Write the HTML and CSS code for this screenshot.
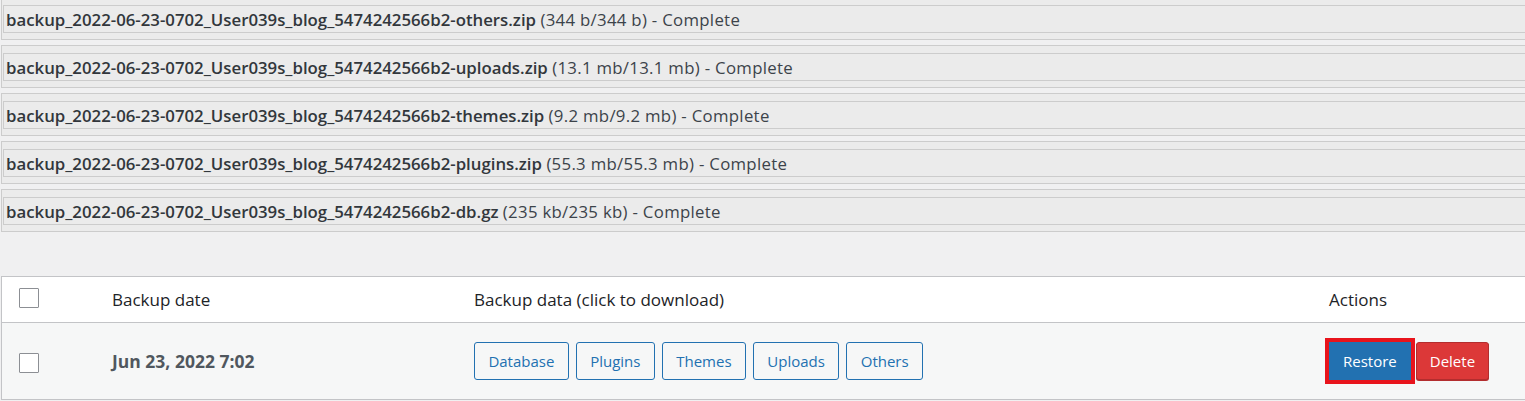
FILE: index.html
```html
<!DOCTYPE html>
<html lang="en">
<head>
<meta charset="utf-8">
<title>Backups</title>
<link rel="stylesheet" href="styles.css">
</head>
<body>
<div class="page">
  <div class="files">
    <div class="file"><div class="file-inner"><strong>backup_2022-06-23-0702_User039s_blog_5474242566b2-others.zip</strong> <span class="meta">(344 b/344 b) - Complete</span></div></div>
    <div class="file"><div class="file-inner"><strong>backup_2022-06-23-0702_User039s_blog_5474242566b2-uploads.zip</strong> <span class="meta">(13.1 mb/13.1 mb) - Complete</span></div></div>
    <div class="file"><div class="file-inner"><strong>backup_2022-06-23-0702_User039s_blog_5474242566b2-themes.zip</strong> <span class="meta">(9.2 mb/9.2 mb) - Complete</span></div></div>
    <div class="file"><div class="file-inner"><strong>backup_2022-06-23-0702_User039s_blog_5474242566b2-plugins.zip</strong> <span class="meta">(55.3 mb/55.3 mb) - Complete</span></div></div>
    <div class="file"><div class="file-inner"><strong>backup_2022-06-23-0702_User039s_blog_5474242566b2-db.gz</strong> <span class="meta">(235 kb/235 kb) - Complete</span></div></div>
  </div>

  <div class="table">
    <div class="row head">
      <div class="cell check"><span class="checkbox"></span></div>
      <div class="cell">Backup date</div>
      <div class="cell">Backup data (click to download)</div>
      <div class="cell">Actions</div>
    </div>
    <div class="row body">
      <div class="cell check"><span class="checkbox"></span></div>
      <div class="cell date">Jun 23, 2022 7:02</div>
      <div class="cell data">
        <span class="btn-outline">Database</span>
        <span class="btn-outline">Plugins</span>
        <span class="btn-outline">Themes</span>
        <span class="btn-outline">Uploads</span>
        <span class="btn-outline">Others</span>
      </div>
      <div class="cell actions">
        <span class="btn btn-restore">Restore</span>
        <span class="btn btn-delete">Delete</span>
      </div>
    </div>
  </div>
</div>
</body>
</html>
```
FILE: styles.css
```css
html, body {
  margin: 0;
  padding: 0;
  background: #f0f0f1;
  overflow: hidden;
}
body {
  font-family: "Open Sans", "Noto Sans", sans-serif;
  font-size: 17px;
  color: #3c434a;
}
.page {
  width: 1600px;
}
.files {
  margin-top: -3px;
  padding-left: 1px;
}
.file {
  border: 1px solid #cccccc;
  background: #ebebeb;
  padding: 7px 0 6px 1px;
  margin-bottom: 5px;
}
.file-inner {
  border: 1px solid #cccccc;
  height: 26px;
  line-height: 28px;
  padding-left: 2px;
  white-space: nowrap;
  font-size: 16.8px;
}
.file-inner strong {
  font-weight: 600;
  color: #32373c;
}
.file-inner .meta {
  letter-spacing: 0.3px;
}
.table {
  margin-top: 44px;
  margin-left: 1px;
  border: 1px solid #c3c4c7;
  border-right: none;
}
.row {
  display: grid;
  grid-template-columns: 98px 362px 855px 1fr;
  align-items: center;
}
.row.head {
  background: #ffffff;
  height: 45px;
  border-bottom: 1px solid #c3c4c7;
  color: #1d2327;
}
.row.body {
  background: #f6f7f7;
  height: 76px;
}
.cell {
  padding-left: 12px;
  display: flex;
  align-items: center;
}
.cell.check {
  padding-left: 17px;
}
.checkbox {
  display: block;
  width: 18px;
  height: 18px;
  border: 1px solid #8c8f94;
  background: #ffffff;
  border-radius: 1px;
}
.row.head .checkbox {
  margin-top: -3px;
}
.row.body .checkbox {
  margin-top: 4px;
}
.date {
  font-weight: 700;
  font-size: 17.5px;
  color: #50575e;
}
.data {
  gap: 7px;
}
.btn-outline {
  display: inline-flex;
  align-items: center;
  height: 36px;
  padding: 0 13.4px;
  border: 1px solid #2271b1;
  border-radius: 3px;
  color: #2271b1;
  background: #f6f7f7;
  font-size: 15px;
}
.actions {
  gap: 5px;
}
.btn {
  display: inline-flex;
  align-items: center;
  height: 36px;
  border-radius: 3px;
  color: #ffffff;
  font-size: 15px;
}
.btn-restore {
  background: #2271b1;
  border: 1px solid #2271b1;
  padding: 0 13px;
  outline: 4px solid #e8141c;
  border-radius: 0;
}
.btn-delete {
  background: #dc3838;
  border: 1px solid #b32d2e;
  box-shadow: 0 1px 0 #b32d2e;
  padding: 0 13px;
}
```
